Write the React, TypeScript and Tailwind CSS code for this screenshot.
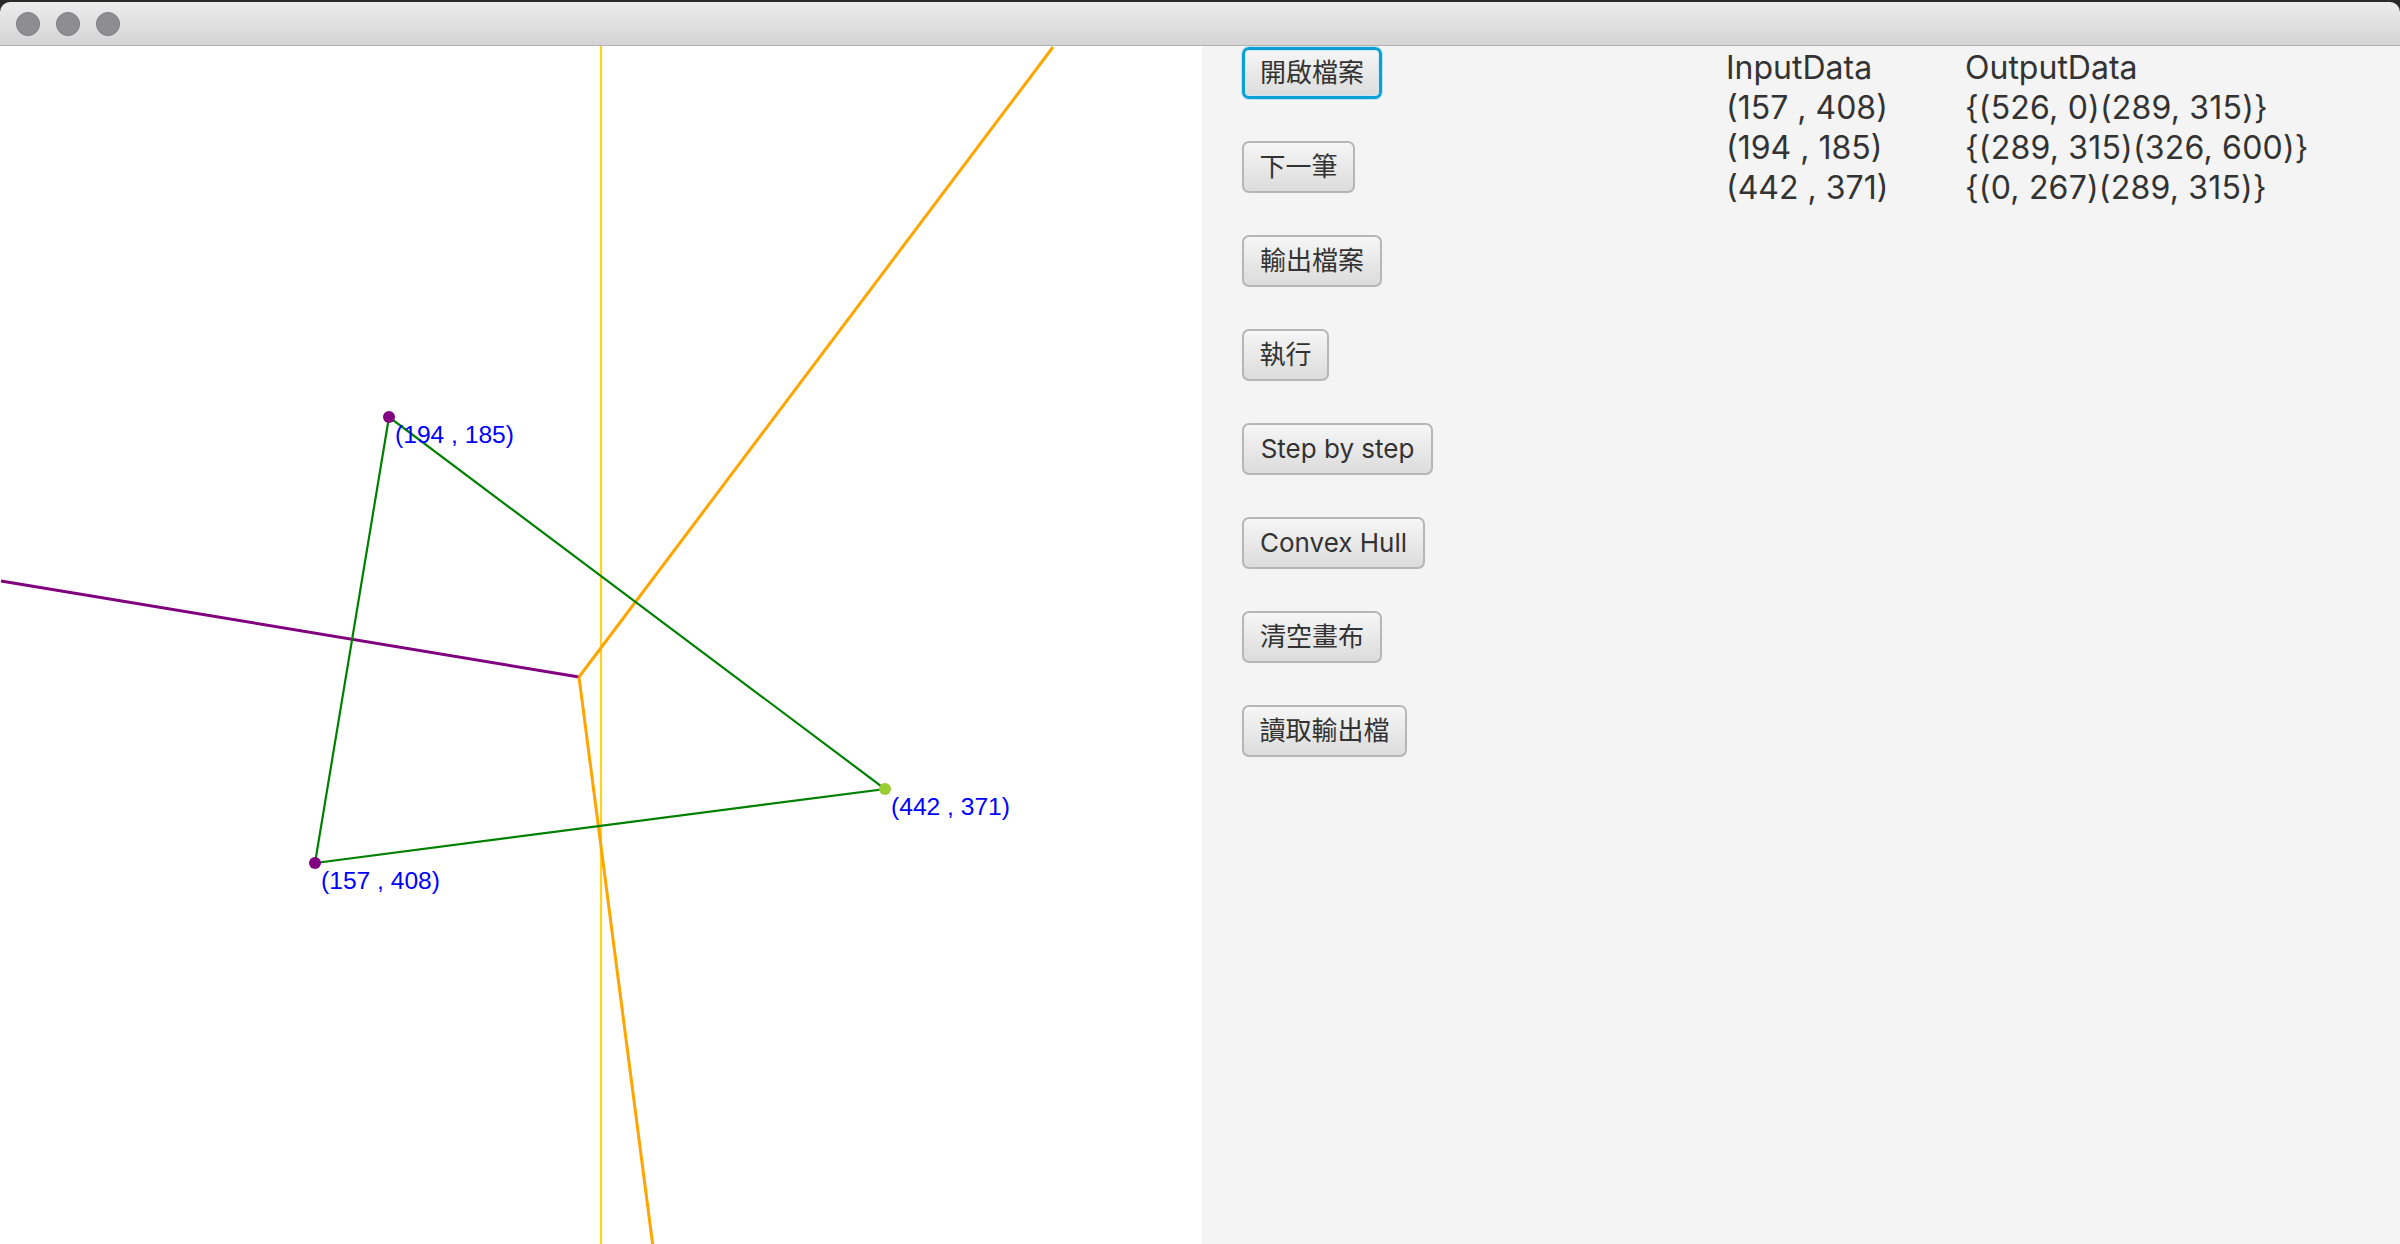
import React from "react";

const pts = [
  { x: 157, y: 408, c: "#800080" },
  { x: 194, y: 185, c: "#800080" },
  { x: 442, y: 371, c: "#9acd32" },
];

const X = (v: number) => 1 + v * 2;
const Y = (v: number) => 1 + v * 2;

function Canvas() {
  return (
    <div className="w-[1202px] h-full bg-white overflow-hidden">
      <svg width="1202" height="1198" viewBox="0 0 1202 1198">
        <line x1={X(300)} y1={0} x2={X(300)} y2={1198} stroke="#ffd21f" strokeWidth="2.2" />
        <line x1={X(0)} y1={Y(267)} x2={X(289)} y2={Y(315)} stroke="#800080" strokeWidth="3" />
        <line x1={X(526)} y1={Y(0)} x2={X(289)} y2={Y(315)} stroke="#ffa500" strokeWidth="3" />
        <line x1={X(289)} y1={Y(315)} x2={X(326)} y2={Y(600)} stroke="#ffa500" strokeWidth="3" />
        <polygon
          points={`${X(194)},${Y(185)} ${X(157)},${Y(408)} ${X(442)},${Y(371)}`}
          fill="none"
          stroke="#008000"
          strokeWidth="2.2"
        />
        {pts.map((p) => (
          <circle key={`c${p.x}`} cx={X(p.x)} cy={Y(p.y)} r="6" fill={p.c} />
        ))}
        {pts.map((p) => (
          <text
            key={`t${p.x}`}
            x={X(p.x) + 6}
            y={Y(p.y) + 26}
            fill="#0000ff"
            fontSize="24.6"
            fontFamily="'Liberation Sans', Arial, sans-serif"
          >
            ({p.x} , {p.y})
          </text>
        ))}
      </svg>
    </div>
  );
}

function Btn({ label, w, focused }: { label: string; w: string; focused?: boolean }) {
  return (
    <button
      className={
        "h-[52px] rounded-[7px] bg-gradient-to-b from-[#f6f6f6] to-[#dcdcdc] text-[26px] leading-none text-[#333333] flex items-center justify-center " +
        w +
        (focused
          ? " border-[3px] border-[#0aa0d6] shadow-[inset_0_0_0_1px_#cfe8f3,0_0_0_1px_#bfe3f3]"
          : " border-2 border-[#b6b6b6]")
      }
    >
      {label}
    </button>
  );
}

export default function App() {
  const rows = [
    ["(157 , 408)", "{(526, 0)(289, 315)}"],
    ["(194 , 185)", "{(289, 315)(326, 600)}"],
    ["(442 , 371)", "{(0, 267)(289, 315)}"],
  ];
  return (
    <div className="w-[2400px] h-[1244px] bg-[#2a2a2a] flex flex-col overflow-hidden font-['Inter','Noto_Sans_CJK_TC',sans-serif]">
      <div className="mt-[2px] h-[44px] shrink-0 rounded-t-[10px] bg-gradient-to-b from-[#ececec] to-[#d4d4d4] border-b border-[#b2b2b2] flex items-center gap-[16px] pl-[16px]">
        <div className="w-[24px] h-[24px] rounded-full bg-[#8e8e92] border border-[#7a7a7e]" />
        <div className="w-[24px] h-[24px] rounded-full bg-[#8e8e92] border border-[#7a7a7e]" />
        <div className="w-[24px] h-[24px] rounded-full bg-[#8e8e92] border border-[#7a7a7e]" />
      </div>
      <div className="flex-1 flex min-h-0">
        <Canvas />
        <div className="flex-1 bg-[#f4f4f4] flex pl-[40px] pt-[1px]">
          <div className="w-[484px] flex flex-col items-start gap-[42px]">
            <Btn label="開啟檔案" w="w-[140px]" focused />
            <Btn label="下一筆" w="w-[113px]" />
            <Btn label="輸出檔案" w="w-[140px]" />
            <Btn label="執行" w="w-[87px]" />
            <Btn label="Step by step" w="w-[191px]" />
            <Btn label="Convex Hull" w="w-[183px]" />
            <Btn label="清空畫布" w="w-[140px]" />
            <Btn label="讀取輸出檔" w="w-[165px]" />
          </div>
          <div className="pt-[1px] text-[32px] leading-[40px] text-[#333333]">
            <div className="flex">
              <div className="w-[239px]">InputData</div>
              <div>OutputData</div>
            </div>
            {rows.map((r) => (
              <div className="flex" key={r[0]}>
                <div className="w-[239px]">{r[0]}</div>
                <div className="tracking-[0.2px]">{r[1]}</div>
              </div>
            ))}
          </div>
        </div>
      </div>
    </div>
  );
}
